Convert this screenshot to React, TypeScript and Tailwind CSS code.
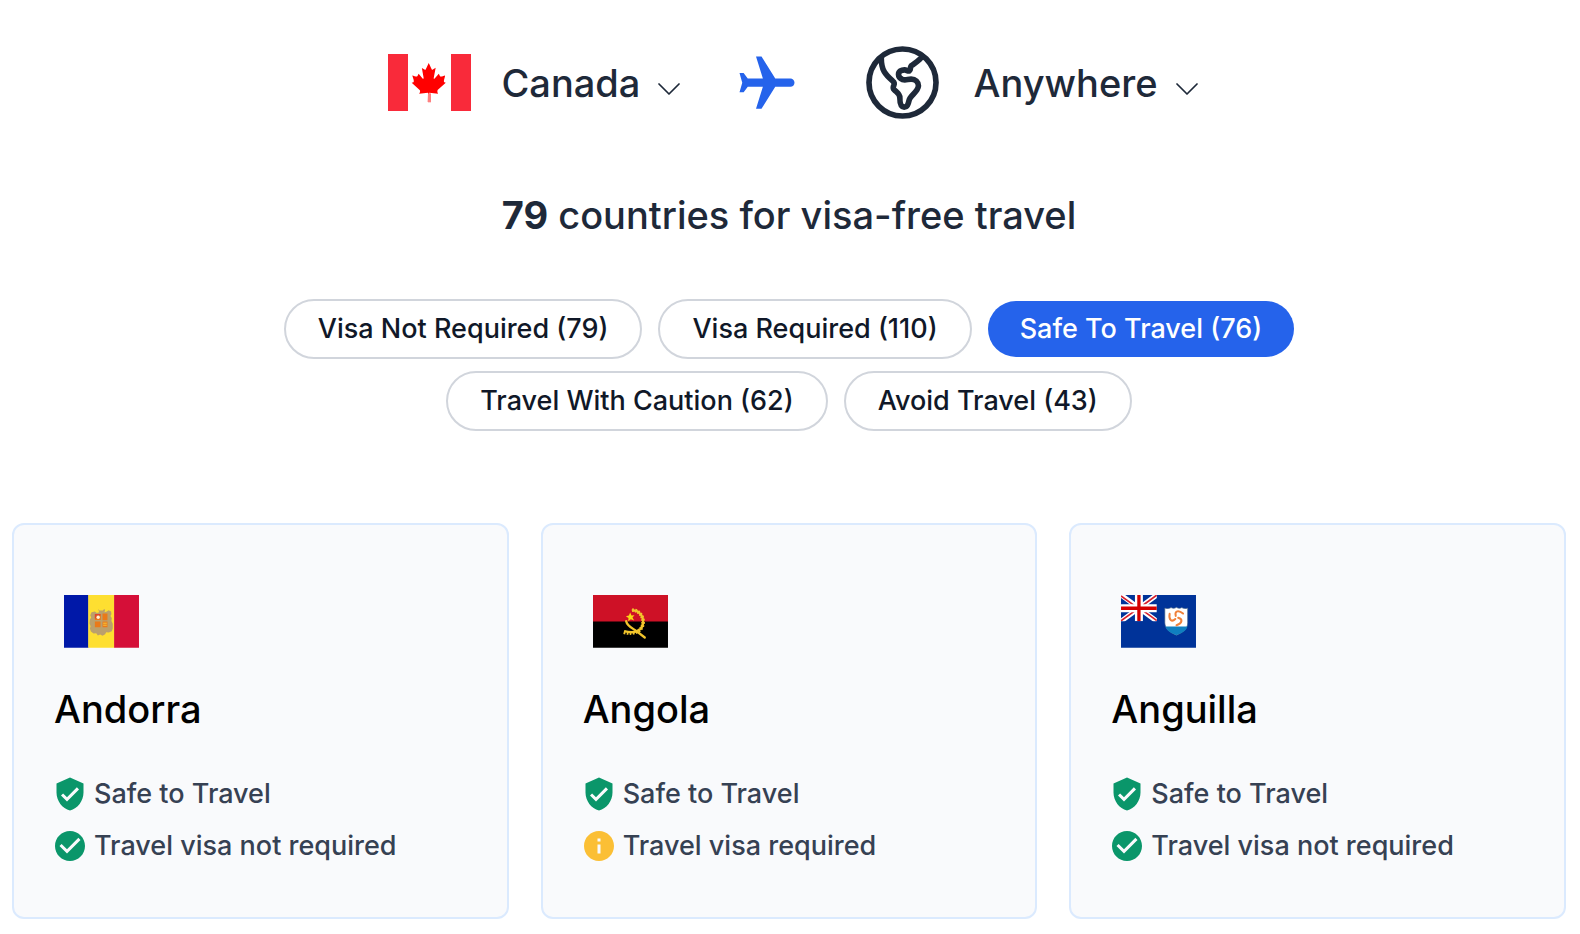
import React, { useState } from 'react';
import { MdCheckCircle, MdFlight, MdInfo, MdVerifiedUser } from 'react-icons/md';

interface Country {
  name: string;
  flag: React.ReactNode;
  visaRequired: boolean;
}

interface Filter {
  id: string;
  label: string;
  count: number;
}

const CanadaFlag: React.FC = () => (
  <svg viewBox="0 0 249 172" className="w-[83px]" aria-hidden="true">
    <path fill="#fff" d="M0 0h249v172H0z" />
    <path fill="#f92a3a" d="M0 0h60v172H0zM189 0h60v172h-60z" />
    <path
      fill="#f00"
      transform="translate(-4 -13) scale(.4 .42)"
      d="m201 232-13.3 4.4 61.4 54c4.7 13.7-1.6 17.8-5.6 25l66.6-8.4-1.6 67 13.9-.3-3.1-66.6 66.7 8c-4.1-8.7-7.8-13.3-4-27.2l61.3-51-10.7-4c-8.8-6.8 3.8-32.6 5.6-48.9 0 0-35.7 12.3-38 5.8l-9.2-17.5-32.6 35.8c-3.5.9-5-.5-5.9-3.5l15-74.8-23.8 13.4c-2 .9-4 .1-5.2-2.2l-23-46-23.6 47.8c-1.8 1.7-3.6 1.9-5 .7L264 130.8l13.7 74.1c-1.1 3-3.7 3.8-6.7 2.2l-31.2-35.3c-4 6.5-6.8 17.1-12.2 19.5-5.4 2.3-23.5-4.5-35.6-7 4.2 14.8 17 39.6 9 47.7z"
    />
    <path fill="#ff8080" d="M120 118h9v27h-9z" />
  </svg>
);

const AndorraFlag: React.FC = () => (
  <svg viewBox="0 0 226 159" className="w-[75px]" aria-hidden="true">
    <path fill="#0018a8" d="M0 0h74v159H0z" />
    <path fill="#fedf31" d="M73 0h79v159H73z" />
    <path fill="#d50f38" d="M151 0h75v159h-75z" />
    <path
      fill="#bba06c"
      d="M103 42l4 5h10l4-5 3 3-2 7 7-2 5-4 8 4 1 8-3 5 4 6-1 9 4 9v14l-3 8-9 4-8-1-3 6-8 5-7-4-7 3-5-7-8 1-8-6-3-9 2-7-3-8 1-12 4-6-3-7 4-9 10-2 6 4 7-2z"
    />
    <path fill="#ea7a1a" d="M93 58h18v17H93zM116 56h15v20h-15zM93 80h17v17H93zM116 80h15v17h-15z" />
    <path fill="#e0452f" d="M93 57h17v5H93zM93 57h4v14h-4z" />
    <circle cx="103" cy="67" r="5" fill="#fff0d8" />
    <path stroke="#f5c63a" strokeWidth="3" d="M118 85h11M118 91h11" />
  </svg>
);

const AngolaFlag: React.FC = () => (
  <svg viewBox="0 0 226 159" className="w-[75px]" aria-hidden="true">
    <path fill="#000" d="M0 0h226v159H0z" />
    <path fill="#ce1126" d="M0 0h226v80H0z" />
    <path fill="none" stroke="#f2c52c" strokeWidth="7" d="M117 47c18-4 34 14 34 34 0 24-22 38-57 28" />
    <path fill="none" stroke="#f2c52c" strokeWidth="11" strokeDasharray="5 4" d="M118 46c18-2 34 16 33 37-1 24-24 38-60 29" />
    <path fill="none" stroke="#f2c52c" strokeWidth="7" strokeLinecap="round" d="M100 79c3 16 22 22 34 32l22 17" />
    <path fill="#f9d616" d="M112 53l4 9 9-1-6 7 5 9-10-4-8 6 1-10-8-5 9-2z" />
  </svg>
);

const AnguillaFlag: React.FC = () => (
  <svg viewBox="0 0 226 159" className="w-[75px]" aria-hidden="true">
    <path fill="#003399" d="M0 0h226v159H0z" />
    <svg width="108" height="79" viewBox="0 0 108 79">
      <path stroke="#fff" strokeWidth="15" d="M0 0l108 79M108 0L0 79" />
      <path stroke="#d8202c" strokeWidth="5" d="M0 3l50 36M108 0L58 37M50 42L0 78M58 41l50 36" />
      <path stroke="#fff" strokeWidth="24" d="M54 0v79M0 40h108" />
      <path stroke="#d40000" strokeWidth="10" d="M54 0v79M0 40h108" />
    </svg>
    <path
      fill="#fff"
      stroke="#3a5a86"
      strokeWidth="2"
      d="M132 39c7 3 13 2 19-1 6 3 10 3 16-1 6 4 11 4 16 1 6 3 12 4 18 1v45c0 18-13 29-34 37-21-8-34-19-35-37z"
    />
    <path fill="#0f7fc0" d="M134 95h66c-3 12-15 20-33 26-18-6-30-14-33-26z" />
    {/* three dolphins chasing each other */}
    <g fill="none" stroke="#f0813a" strokeWidth="6" strokeLinecap="round" transform="translate(167 68)">
      <path d="M-2-5C-6-20 6-24 20-12" />
      <path transform="rotate(120)" d="M-2-5C-6-20 6-24 20-12" />
      <path transform="rotate(240)" d="M-2-5C-6-20 6-24 20-12" />
    </g>
  </svg>
);

const GlobeIcon: React.FC = () => (
  <svg
    viewBox="500 48 220 220"
    className="w-[73px]"
    fill="none"
    stroke="currentColor"
    strokeLinecap="round"
    strokeLinejoin="round"
    aria-hidden="true"
  >
    <circle cx="610" cy="158" r="101" strokeWidth="17" />
    <path
      strokeWidth="17"
      d="M546 84c0 37 12 50 35 70 5 4 5 7 3 12-3 6-4 9 1 14 9 9 17 12 17 24 0 18 3 28 13 28 10 0 12-8 15-21 3-14 27-25 28-43 0-12-9-20-22-20-10 0-17 4-26 1-8-3-12-9-12-15 0-10 9-14 18-14 7 0 10 5 15 3 5-3 1-10 5-15 9-8 25-15 34-29"
    />
  </svg>
);

const ChevronIcon: React.FC = () => (
  <svg
    viewBox="0 0 22 12"
    className="pointer-events-none absolute right-0 bottom-3 w-[22px]"
    fill="none"
    stroke="currentColor"
    strokeWidth="1.7"
    strokeLinecap="round"
    strokeLinejoin="round"
    aria-hidden="true"
  >
    <path d="M1 1l10 10L21 1" />
  </svg>
);

interface CountrySelectProps {
  label: string;
  options: string[];
}

const CountrySelect: React.FC<CountrySelectProps> = ({ label, options }) => (
  <div className="relative">
    <select
      aria-label={label}
      className="block appearance-none bg-transparent pr-10 text-[38px] leading-[48px] font-medium field-sizing-content"
    >
      {options.map((option) => (
        <option key={option}>{option}</option>
      ))}
    </select>
    <ChevronIcon />
  </div>
);

const filters: Filter[] = [
  { id: 'visa-free', label: 'Visa Not Required', count: 79 },
  { id: 'visa', label: 'Visa Required', count: 110 },
  { id: 'safe', label: 'Safe To Travel', count: 76 },
  { id: 'caution', label: 'Travel With Caution', count: 62 },
  { id: 'avoid', label: 'Avoid Travel', count: 43 }
];

const countries: Country[] = [
  { name: 'Andorra', flag: <AndorraFlag />, visaRequired: false },
  { name: 'Angola', flag: <AngolaFlag />, visaRequired: true },
  { name: 'Anguilla', flag: <AnguillaFlag />, visaRequired: false }
];

const CountryCard: React.FC<{ country: Country }> = ({ country }) => (
  <li className="rounded-xl border-2 border-blue-100 bg-[#f9fafc] px-10 pt-[70px] pb-[51px]">
    <div className="pl-2.5">{country.flag}</div>
    <h2 className="mt-9 text-[38px] leading-[50px] font-medium text-black">{country.name}</h2>
    <div className="mt-10 -ml-0.5 space-y-3 text-[27px] leading-10 font-medium text-gray-700">
      <p className="flex items-center gap-1.5">
        <MdVerifiedUser className="size-9 shrink-0 text-[#0a966a]" />
        Safe to Travel
      </p>
      <p className="flex items-center gap-1.5">
        {country.visaRequired ? (
          <MdInfo className="size-9 shrink-0 text-[#fbbf35]" />
        ) : (
          <MdCheckCircle className="size-9 shrink-0 text-[#0a966a]" />
        )}
        {country.visaRequired ? 'Travel visa required' : 'Travel visa not required'}
      </p>
    </div>
  </li>
);

export default function App() {
  const [active, setActive] = useState('safe');

  return (
    <main className="min-h-screen bg-white pt-[46px] pr-3.5 pb-3 pl-3 font-['Inter',sans-serif] text-gray-800">
      {/* Origin and destination */}
      <div className="flex flex-wrap items-center justify-center pl-2">
        <div className="flex h-[73px] items-center gap-[30px]">
          <CanadaFlag />
          <CountrySelect label="Travelling from" options={['Canada', 'Andorra', 'Angola', 'Anguilla']} />
        </div>
        <MdFlight className="mx-[54px] mt-0.5 size-[66px] rotate-90 text-[#2563eb]" />
        <div className="ml-3 flex h-[73px] items-center gap-[34px]">
          <GlobeIcon />
          <CountrySelect label="Travelling to" options={['Anywhere', 'Andorra', 'Angola', 'Anguilla']} />
        </div>
      </div>

      <h1 className="mt-[72px] text-center text-[38px] leading-[48px] font-medium">
        <span className="font-bold">79</span> countries for visa-free travel
      </h1>

      {/* Filters */}
      <div className="mx-auto mt-[60px] flex max-w-[1100px] flex-wrap items-center justify-center gap-x-4 gap-y-3">
        {filters.map((filter) => (
          <button
            key={filter.id}
            type="button"
            aria-pressed={active === filter.id}
            onClick={() => setActive(filter.id)}
            className={
              active === filter.id
                ? 'rounded-full bg-[#2563eb] px-8 py-2 text-[27px] leading-10 font-medium text-white'
                : 'rounded-full border-2 border-gray-300 px-8 py-2 text-[27px] leading-10 font-medium text-gray-900'
            }
          >
            {filter.label} ({filter.count})
          </button>
        ))}
      </div>

      {/* Results */}
      <ul className="mt-[92px] grid grid-cols-3 gap-8">
        {countries.map((country) => (
          <CountryCard key={country.name} country={country} />
        ))}
      </ul>
    </main>
  );
}
